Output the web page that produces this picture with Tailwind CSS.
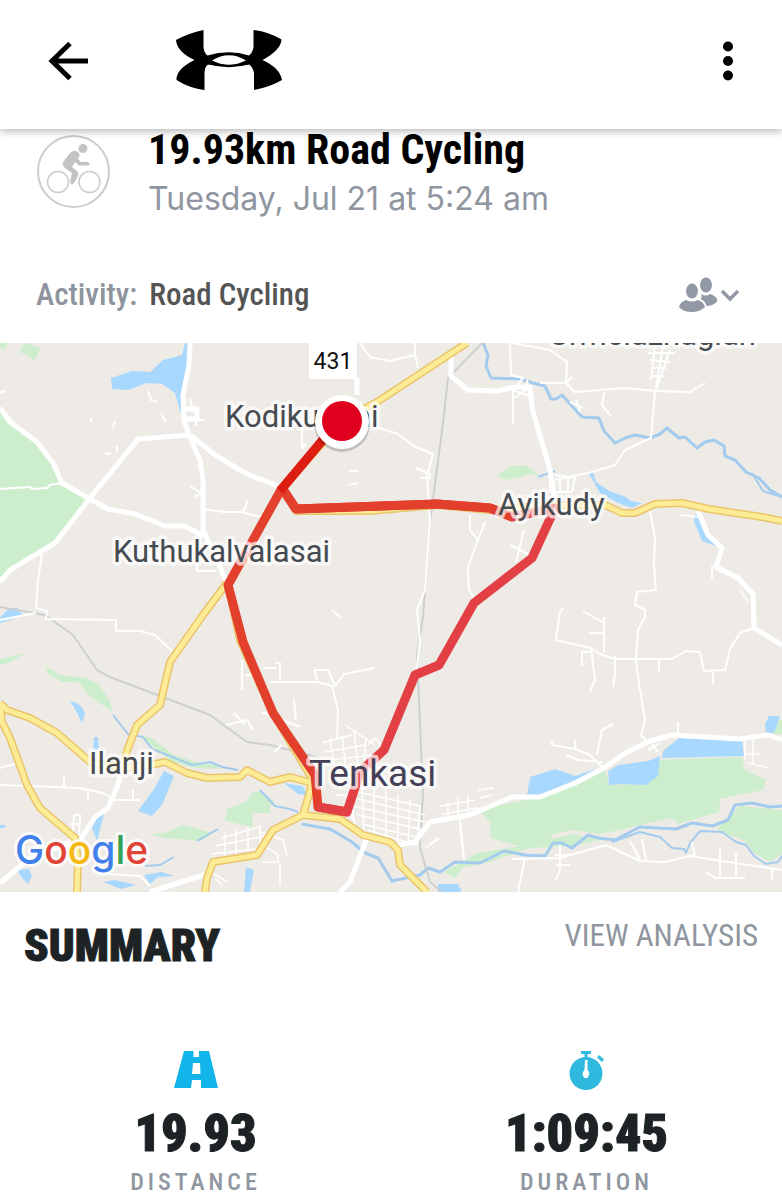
<!DOCTYPE html>
<html lang="en">

<head>
  <meta charset="UTF-8">
  <meta name="viewport" content="width=device-width, initial-scale=1.0">
  <title>19.93km Road Cycling</title>
  <script src="https://cdn.jsdelivr.net/npm/@tailwindcss/browser@4"></script>
</head>

<body class="bg-white font-['Roboto_Condensed','Liberation_Sans_Narrow','Liberation_Sans',sans-serif] text-[#1d2325]">

  <!-- App bar -->
  <header class="sticky top-0 z-10 flex h-[129px] items-center justify-between bg-white px-12 pb-2 shadow-[0_2px_8px_rgba(0,0,0,0.3)]">
    <div class="flex items-center gap-[85px]">
      <button type="button" aria-label="Back" class="block">
        <svg class="h-10 w-[42px]" viewBox="0 0 42 40" fill="none" stroke="#000" stroke-width="5">
          <path d="M40 20H5M22 2.5L4 20l18 17.500" />
        </svg>
      </button>
      <svg class="h-[62px] w-[108px]" viewBox="0 0 108 62" role="img" aria-label="Under Armour">
        <path d="M1 10Q14 3 28.500 0V17Q29 23 32.500 25.500Q54 19 74 25.500Q78 22 78.500 17V0Q94 2 106.500 9.500Q106 20 87.500 30Q105 38 107 50Q95 57 79 60V43Q78 37 74 34.500Q54 38.500 33 34.500Q29.500 37 29.500 43V60Q14 58 1.500 50Q1 39 19.500 30Q2 22 1 10Z" />
        <path d="M37 30.500Q54 20 71 30.500Q54 39 37 30.500Z" fill="#fff" />
        <path d="M33 33Q54 39.500 74 33" fill="none" stroke="#000" stroke-width="2" />
      </svg>
    </div>
    <button type="button" aria-label="More options" class="block">
      <svg class="h-10 w-3" viewBox="0 0 12 40">
        <circle cx="6" cy="5.500" r="5" />
        <circle cx="6" cy="20" r="5" />
        <circle cx="6" cy="34.500" r="5" />
      </svg>
    </button>
  </header>

  <main>
    <!-- Workout title -->
    <section class="flex items-start gap-[37px] px-9">
      <svg class="mt-[5px] h-[75px] w-[75px] shrink-0" viewBox="0 0 75 75" fill="none" role="img" aria-label="Cycling">
        <circle cx="37.500" cy="37.500" r="35.500" stroke="#ccc" stroke-width="2" />
        <circle cx="22" cy="48" r="10.500" stroke="#ccc" stroke-width="1.500" />
        <circle cx="53.500" cy="48" r="10.500" stroke="#ccc" stroke-width="1.500" />
        <circle cx="47" cy="14.500" r="4.500" fill="#c3c3c3" />
        <path d="M27 28L34 19Q38 15 42 18Q45 21 42 25L45 28H52Q55 30 52 31.500H43L39 28L36 33L41 37Q43 39 42 42L38 49Q35 52 34 48L36 39L29 34Q26 31 27 28Z" fill="#c3c3c3" />
      </svg>
      <div>
        <h1 class="text-[42px] leading-[42px] font-bold text-black">19.93km Road Cycling</h1>
        <p class="font-['Inter','Liberation_Sans',sans-serif] text-[32px] leading-[56px] text-[#9096a0]">Tuesday, Jul 21 at 5:24 am</p>
      </div>
    </section>

    <!-- Activity type and privacy -->
    <section class="mt-11 flex h-[72px] items-center justify-between px-9 pb-6">
      <p class="flex gap-3 text-[31px] leading-10 font-medium">
        <span class="text-[#8e949e]">Activity:</span>
        <span class="text-[#555]">Road Cycling</span>
      </p>
      <button type="button" aria-label="Privacy" class="block">
        <svg class="h-9 w-[68px]" viewBox="0 0 68 36" fill="#9298a4">
          <ellipse cx="28" cy="8" rx="6" ry="7.500" />
          <path d="M23 17q5 3 9 0q7 2 7.500 7q-4 5-11 5q-1-5-6-7q2-2 .5-5z" />
          <ellipse cx="14" cy="14" rx="6" ry="7.500" />
          <path d="M8 23q6 3 12 0q6 2 7 7q-5 5-13 5q-9 0-13-5q1-5 7-7z" />
          <path d="M44 14l8 8 8-8" fill="none" stroke="#9298a4" stroke-width="3.500" />
        </svg>
      </button>
    </section>

    <!-- Route map -->
    <svg class="block h-auto w-full bg-[#eeebe6]" viewBox="0 343 782 549" fill="none" stroke-linejoin="round" role="img" aria-label="Route map">
      <!-- parks -->
      <g fill="#cdeecd">
        <path d="M0 408L10 422L37 442L53 463L62 483L88 498L55 543L10 570L0 582Z" />
        <path d="M0 343H8L5 350L0 348ZM24 343L41 348L34 361L28 355L19 352Z" />
        <path d="M0 659L25 653L10 662L0 665ZM45 666L60 675L85 678L98 684L110 701L112 712L90 696L78 682L62 682L48 674Z" />
        <path d="M497 475L512 466L525 465L540 476L530 474L516 478L505 480Z" />
        <path d="M143 736L152 738L172 754L196 762L215 765L220 769L196 768L172 762L150 744Z" />
        <path d="M228 808L246 802L252 793L262 791L270 798V813H252L253 827L234 823L225 820Z" />
        <path d="M149 834L165 833L183 825L212 833L202 841L165 838ZM260 792L274 800L274 806L260 800Z" />
        <path d="M478 810L544 796L604 769L610 785L646 784L656 760L742 757L745 770L766 780L763 790L720 799L719 812L678 824L672 818L640 825L625 829L600 834L572 830L553 834L550 841L528 849L491 838L490 822Z" />
        <path d="M444 872L478 853L515 847L574 834L600 840L575 846L530 848L490 862L462 868L455 878Z" />
        <path d="M718 828L740 806L782 810V854L770 862L754 853L742 839L720 833ZM777 720H782V734H774Z" />
      </g>
      <!-- lakes -->
      <g fill="#a9d8ff">
        <path d="M111 378L132 371L150 372L163 360L182 355L185 343H190L184 393V414H181L175 393L162 384L147 383L128 390L112 389Z" />
        <path d="M0 618L8 609L18 608L23 616L10 620L0 623ZM70 701Q82 703 85 714L82 723L76 711ZM94 737H98L99 750H93Z" />
        <path d="M164 771L174 776L162 805L152 816L138 811L154 789ZM98 816L104 814L97 841L92 828ZM0 825H5V828H0Z" />
        <path d="M17 870L29 869L32 876L28 884L22 878ZM103 882L115 880L136 885L121 889ZM144 875L162 872L174 876L158 877L150 884ZM246 867L254 870L250 892H244Z" />
        <path d="M588 472H593L596 482L611 492L624 496L631 501L642 503L632 508L616 502L600 493Z" />
        <path d="M696 512L704 526L709 537L719 547L702 541L701 538L694 522Z" />
        <path d="M527 795L530 777L555 769L575 776L596 769L604 769L570 785L540 796Z" />
        <path d="M608 771L618 765L648 761L660 756L658 776L646 785L620 784L609 785Z" />
        <path d="M663 751L679 738L742 741L744 756L662 758ZM765 724L769 716H780L774 733L766 733ZM284 783L302 786L308 795L298 794ZM438 884H458L462 892H438Z" />
      </g>
      <!-- streams -->
      <g stroke="#a3cbee" stroke-width="2">
        <path stroke-width="3" d="M483 343L488 355L486 366L491 378L520 379L533 383L545 386L551 399L556 399L562 395L582 417L599 418L604 431L615 443L625 438L635 435L650 438L660 434L667 428L679 438L685 437L697 448L705 442L714 440L724 446L725 456L735 460L746 472L759 478L770 490L782 497" />
        <path stroke-width="3" d="M302 824L330 829L352 842L365 853L378 858L392 881L420 875L428 868L440 872L455 862L480 863L504 851L525 855L545 856L553 843L562 843L572 848L588 835L598 838L615 840L640 827L676 829L692 823L712 826L728 820L735 805L752 803L770 807L782 806" />
        <path d="M612 842L640 832L660 837L672 848L684 849L686 853L690 843L700 831L722 832L736 842L746 845L754 856L766 864L778 862L782 856" />
        <path d="M113 715L128 734L143 737L152 749L170 756L192 765L210 762L222 767L238 770M260 790L275 806L290 809L298 812M197 841L218 829M145 866L160 865L174 857M538 477L555 471M752 473L763 491L782 497" />
      </g>
      <!-- railways -->
      <g stroke="#cdd0d0" stroke-width="2">
        <path d="M482 343L448 378L443 423L430 523L423 617L417 655L423 792L420 848L430 882L442 892" />
        <path d="M0 607L45 615L73 635L97 670L110 677L210 715L247 742L270 745L320 758" />
      </g>
      <!-- lanes -->
      <g stroke="#fff" stroke-width="2">
        <path d="M0 489L30 487L32 489L47 488L50 485L62 483M42 553L38 580L36 608L47 611L46 619L116 620V631L140 631L155 635L172 651M0 620L36 613M0 392L6 391M203 509L225 512L240 512L262 517M243 513L248 500" />
        <path d="M148 391L151 400L157 402M91 418V423M115 422L113 428M105 453L111 454M117 446V452M161 413L166 422M190 398L192 407M196 412V426M188 420H204M190 486L201 493L194 497M197 564V571H216" />
        <path d="M360 343L370 357L390 361L415 355V343M415 355L418 368M370 425L398 434L414 446L433 454L427 475L430 520L425 590L417 610L420 640L416 675M416 468L430 474V478H420M349 471H358M348 485L358 483M332 610L340 617M302 425V448L306 444" />
        <path d="M510 343L511 375L523 378L513 390V424M512 390L530 396M515 398L530 386M527 380L530 400M470 515V530L478 540L468 567L469 590L474 598M478 540L485 522M510 545L530 555M524 530L516 562" />
        <path d="M512 343L550 350L567 362L566 383L575 392L600 390L625 388L655 391L690 392L705 383M566 383L572 377M566 383H540M655 391L651 438L625 450L615 465L592 472L555 480M604 392L602 405L611 416M570 402L583 408M576 400L580 412" />
        <path d="M648 353L675 353M650 360L670 362M652 368H666M653 376H664M655 345L651 380M663 346L656 388M670 350L656 390M550 480V492H572M555 475L575 478L572 492M560 480V492M568 476V490" />
        <path d="M650 510L655 538L654 565L656 590L637 592L635 605L645 610V617L638 630L636 662L640 690L645 720L641 735L647 742M560 612L556 640L590 648L600 654L615 659L672 659L686 651L700 652L704 671L725 670L730 649L740 633L754 628M604 617V652M589 633H603M583 611L604 623V617M591 648L595 680L590 692M582 652V666M581 652H591M615 656V675L613 687M659 660V672M711 672L713 672V684M560 612L563 608" />
        <path d="M552 741V745L575 749L590 755L603 768M575 740V748M566 755L578 760L602 762M597 755L602 730L613 724M678 738V722M648 750L660 743M652 744L658 752" />
        <path d="M512 859L560 858L606 845L640 861L665 862L690 856L735 863L782 870M525 858L518 892M630 841L640 860M642 839L646 860M692 842L695 857M720 848V878M736 853V878M706 872L715 878H745M560 845V870L556 880M556 865H570M555 855H570M772 868V880" />
        <path d="M270 682H318L332 686L338 710L337 740M314 670L318 682M314 670H328L335 686L344 674L375 668M275 663H280V680M263 668H276M262 712L300 727M294 700L296 720M282 720L297 742M274 752L282 745M226 725L247 720L253 730M234 713L245 725M242 660V690M246 675H260M430 845L438 838M460 826L464 860" />
        <path d="M0 785L80 788L103 793L115 800H140M88 790V800M0 768L15 764M64 777V788M133 790V800M72 840L74 815H80L79 835M70 824H80M92 870L110 874L140 876L150 886" />
      </g>
      <!-- town blocks -->
      <g stroke="#fff" stroke-width="1.500">
        <path d="M322 743L352 735M325 752L365 745M330 760L372 755M330 738L334 765M342 735L346 770M354 730L358 765M366 738L364 760M345 725L375 745M368 745L375 738L382 747" />
        <path d="M340 788L420 806M345 796L425 815M352 806L425 822M358 815L424 830M362 824L420 838M368 830L416 845M350 785L355 828M362 785L364 835M374 788L374 838M386 790L386 840M398 795L398 842M410 800L408 844M420 805L417 846M440 838L425 848M335 795H352V820" />
        <path d="M440 806L475 800M442 814L478 808M448 803V816M458 798V816M468 796V814M478 790L494 788M480 798L492 795M460 818L464 858M745 740V760M753 735V765M744 754H760M748 763L768 768" />
        <path d="M222 838L262 826M215 846L265 836M212 854L264 848M225 833V858M236 830V855M248 827V852M260 826V845M210 872L228 882M215 878L222 885M260 832L283 840L287 855M263 845L278 855V862H262M280 862V885M700 510V517L680 515M712 565V580M740 590L748 602" />
      </g>
      <!-- roads -->
      <g stroke="#fff" stroke-width="5">
        <path d="M190 343L189 365L183 395L184 420L189 435L200 460L203 480L203 530L215 555L227 583" />
        <path d="M0 408L10 422L37 442L53 463L62 483L88 498L108 509L135 514L165 526H185L203 536" />
        <path d="M282 488L245 473L215 455L190 435L138 439L90 498L55 543L10 570L0 582" />
        <path d="M451 353V376L468 390L497 391L515 387H530L532 408L550 470L555 500" />
        <path d="M698 511L708 535L722 548L716 567L738 578L753 594L754 628L782 645" />
        <path d="M398 845L415 842L430 822L470 815L512 797H540L575 783L604 768L625 753L650 741L672 735L740 739L768 735L782 740" />
        <path d="M123 767L118 785L108 808L95 817L80 840M0 883L30 858L75 840M367 838L350 882L340 892M150 892L175 884L207 874M184 409H197V419H184M357 378V395" />
      </g>
      <!-- highways: casing, then fill -->
      <g stroke="#e9c46a" stroke-width="8">
        <path id="highways" d="M227 583L203 615L170 662L160 705L137 725L128 748L123 765M0 703L7 710L30 718L57 733L90 762L125 768L155 764L165 762L187 773L207 778L240 777L247 770L270 782L290 777L312 783L308 798L303 815L340 819L363 835L390 842L398 850L400 865L427 892M0 703L2 722L10 738L27 785L40 808L75 838L78 862L77 892M303 815L273 830L257 855L213 862L207 878L205 892M467 343L377 402L342 421L282 488L228 585L240 640L273 713L314 782M282 488L296 511L370 511L437 505L490 510L555 505L605 505L622 513H635L655 504L682 503L709 509L762 517L782 521" />
      </g>
      <use href="#highways" stroke="#fdec96" stroke-width="5" />

      <!-- recorded route -->
      <path d="M347 812L318 807L315 775L273 713L243 642L228 585L282 488" stroke="#e2402c" stroke-width="9" />
      <path d="M282 488L296 509L437 504L490 508L512 517L555 508L532 558L474 603L439 665L415 675L384 750L360 772L347 812L318 807" stroke="#e24045" stroke-width="9" />
      <path d="M282 488L296 509L437 504L490 508L512 517" stroke="#e2402c" stroke-width="9" />
      <path d="M342 417L280 491" stroke="#dd1c12" stroke-width="9" />

      <!-- place names -->
      <g class="font-['Roboto',sans-serif]" font-size="31" fill="#454b50" stroke="#fff" stroke-opacity="0.7" stroke-width="7" paint-order="stroke">
        <text x="549" y="345">Urmelazhagian</text>
        <text x="225" y="427">Kodikurichi</text>
        <text x="498" y="515">Ayikudy</text>
        <text x="113" y="562">Kuthukalvalasai</text>
        <text x="89" y="774">Ilanji</text>
        <text x="309" y="786" font-size="37" fill="#453f58">Tenkasi</text>
      </g>
      <path d="M309 343H357V379H309Z" fill="#fff" />
      <text x="333" y="369" text-anchor="middle" class="font-['Roboto',sans-serif]" font-size="23" fill="#111">431</text>

      <!-- start marker -->
      <circle cx="342" cy="424" r="28" fill="#000" fill-opacity="0.18" />
      <circle cx="342" cy="422" r="27" fill="#fff" />
      <circle cx="342" cy="421" r="20" fill="#de001c" />

      <text x="15" y="864" class="font-['Inter',sans-serif]" font-size="39" font-weight="500" stroke="#fff" stroke-opacity="0.8" stroke-width="6" paint-order="stroke"><tspan fill="#4280ec">G</tspan><tspan fill="#e04438">o</tspan><tspan fill="#f4b913">o</tspan><tspan fill="#4280ec">g</tspan><tspan fill="#35a355">l</tspan><tspan fill="#e04438">e</tspan></text>
    </svg>

    <!-- Summary -->
    <section class="pt-6">
      <div class="flex items-start justify-between px-6">
        <h2 class="pt-1 text-[45px] leading-[52px] font-black [-webkit-text-stroke:1px_#1d2325]">SUMMARY</h2>
        <a href="#analysis" class="text-[31px] leading-10 text-[#9096a0]">VIEW ANALYSIS</a>
      </div>

      <dl class="mt-[78px] grid grid-cols-2 text-center">
        <div class="flex flex-col items-center">
          <svg class="h-10 w-11" viewBox="0 0 44 40" fill="#12b5ea" aria-hidden="true">
            <path fill-rule="evenodd" d="M10 1H19.500V7H25V1H35L44 38H27V30H18L17 38H0ZM19 13L18 24H26.500L26 13Z" />
          </svg>
          <dd class="mt-4 text-[52px] leading-[56px] font-black [-webkit-text-stroke:1px_#1d2325]">19.93</dd>
          <dt class="mt-1 text-2xl leading-8 font-medium tracking-[4px] text-[#9096a0]">DISTANCE</dt>
        </div>
        <div class="flex flex-col items-center">
          <svg class="h-10 w-11" viewBox="0 0 44 40" fill="#2fb9de" aria-hidden="true">
            <circle cx="21" cy="23.500" r="16.500" />
            <path d="M16 1H26V4H22.500V9H19.500V4H16ZM34 5L39 9.500L37 12L32 7.500Z" />
            <path d="M20 10H22.500V20Q25 22 24 25L22.500 28H19.500L17.500 25Q17 22 19.500 20Z" fill="#fff" />
          </svg>
          <dd class="mt-4 text-[52px] leading-[56px] font-black [-webkit-text-stroke:1px_#1d2325]">1:09:45</dd>
          <dt class="mt-1 text-2xl leading-8 font-medium tracking-[4px] text-[#9096a0]">DURATION</dt>
        </div>
      </dl>
    </section>
  </main>
</body>

</html>
